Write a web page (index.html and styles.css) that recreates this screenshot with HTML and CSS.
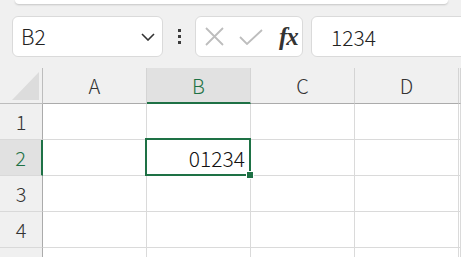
FILE: index.html
```html
<!DOCTYPE html>
<html>
<head>
    <title></title>
    <meta charset="utf-8">
    <link rel="stylesheet" href="styles.css">
</head>
<body>
<div class="ribbon-edge"></div>

<div class="toolbar">
    <div class="namebox">
        <span class="name">B2</span>
        <svg class="chevron" width="14" height="8" viewBox="0 0 14 8">
            <path d="M1 1 L7 7 L13 1" fill="none" stroke="#333" stroke-width="1.6"/>
        </svg>
    </div>
    <div class="dots">
        <span></span><span></span><span></span>
    </div>
    <div class="fxbox">
        <svg class="icon" width="19" height="19" viewBox="0 0 19 19">
            <path d="M1 1 L18 18 M18 1 L1 18" stroke="#bdbdbd" stroke-width="1.8"/>
        </svg>
        <svg class="icon" width="24" height="16" viewBox="0 0 24 16">
            <path d="M1 8 L8 15 L23 1" fill="none" stroke="#bdbdbd" stroke-width="1.8"/>
        </svg>
        <span class="fx">fx</span>
    </div>
    <div class="formula">1234</div>
</div>

<div class="sheet">
    <div class="grid">
        <div class="corner"><span class="corner-tri"></span></div>
        <div class="colhead">A</div>
        <div class="colhead active">B</div>
        <div class="colhead">C</div>
        <div class="colhead">D</div>
        <div class="colhead rest"></div>

        <div class="rowhead">1</div>
        <div class="cell"></div>
        <div class="cell"></div>
        <div class="cell"></div>
        <div class="cell"></div>
        <div class="cell rest"></div>

        <div class="rowhead active">2</div>
        <div class="cell"></div>
        <div class="cell value">01234</div>
        <div class="cell"></div>
        <div class="cell"></div>
        <div class="cell rest"></div>

        <div class="rowhead">3</div>
        <div class="cell"></div>
        <div class="cell"></div>
        <div class="cell"></div>
        <div class="cell"></div>
        <div class="cell rest"></div>

        <div class="rowhead">4</div>
        <div class="cell"></div>
        <div class="cell"></div>
        <div class="cell"></div>
        <div class="cell"></div>
        <div class="cell rest"></div>

        <div class="rowhead"></div>
        <div class="cell"></div>
        <div class="cell"></div>
        <div class="cell"></div>
        <div class="cell"></div>
        <div class="cell rest"></div>
    </div>
    <div class="selection"><span class="handle"></span></div>
</div>
</body>
</html>
```

FILE: styles.css
```css
body {
    margin: 0;
    width: 461px;
    height: 257px;
    overflow: hidden;
    background: #f0f0f0;
    font-family: "Noto Sans CJK JP", "Noto Sans", sans-serif;
    font-weight: 300;
    color: #222;
}

.ribbon-edge {
    height: 4px;
    margin: 0 13px 0 15px;
    background: #fff;
    border-radius: 0 0 8px 8px;
    box-shadow: 0 1px 2px rgba(0, 0, 0, 0.18);
}

.toolbar {
    display: flex;
    align-items: center;
    height: 41px;
    margin-top: 12px;
    padding-left: 12px;
    overflow: hidden;
}

.namebox {
    box-sizing: border-box;
    width: 151px;
    height: 41px;
    display: flex;
    align-items: center;
    justify-content: space-between;
    padding: 0 7px 0 8px;
    background: #fff;
    border: 1px solid #dadada;
    border-radius: 6px;
}

.name {
    font-size: 21px;
    line-height: 1;
}

.dots {
    width: 32px;
    display: flex;
    flex-direction: column;
    align-items: center;
    gap: 3px;
}

.dots span {
    width: 3px;
    height: 3px;
    background: #3c3c3c;
}

.fxbox {
    box-sizing: border-box;
    width: 108px;
    height: 41px;
    display: flex;
    align-items: center;
    padding-left: 9px;
    background: #fff;
    border: 1px solid #dadada;
    border-radius: 6px;
}

.fxbox .icon + .icon {
    margin-left: 15px;
}

.fx {
    margin-left: 16px;
    font-family: "Liberation Serif", serif;
    font-style: italic;
    font-weight: bold;
    font-size: 25px;
    line-height: 1;
    color: #333;
    letter-spacing: -1px;
}

.formula {
    box-sizing: border-box;
    flex: 1;
    height: 41px;
    margin-left: 8px;
    margin-right: -10px;
    padding-left: 19px;
    display: flex;
    align-items: center;
    background: #fff;
    border: 1px solid #dadada;
    border-radius: 6px;
    font-size: 21px;
}

.sheet {
    position: relative;
    margin-top: 11px;
    overflow: hidden;
}

.grid {
    display: grid;
    grid-template-columns: 43px 104px 104px 104px 104px 2px;
    grid-auto-rows: 36px;
    background: #fff;
}

.corner,
.colhead,
.rowhead,
.cell {
    box-sizing: border-box;
}

.corner {
    background: #f0f0f0;
    border-right: 1px solid #bdbdbd;
    border-bottom: 1px solid #bdbdbd;
    padding: 4px 3px 3px 12px;
}

.corner-tri {
    display: block;
    width: 100%;
    height: 100%;
    background: #dcdcdc;
    clip-path: polygon(100% 0, 100% 100%, 0 100%);
}

.colhead {
    background: #f0f0f0;
    border-right: 1px solid #d4d4d4;
    border-bottom: 1px solid #ababab;
    display: flex;
    align-items: center;
    justify-content: center;
    font-size: 20px;
    color: #333;
}

.colhead.active {
    background: #e1e1e1;
    color: #1e7145;
    border-bottom: 2px solid #1e7145;
}

.rowhead {
    background: #f0f0f0;
    border-right: 1px solid #ababab;
    border-bottom: 1px solid #d9d9d9;
    display: flex;
    align-items: center;
    justify-content: center;
    font-size: 20px;
    color: #333;
}

.rowhead.active {
    background: #e1e1e1;
    color: #1e7145;
    border-right: 2px solid #1e7145;
}

.cell {
    border-right: 1px solid #dadada;
    border-bottom: 1px solid #dadada;
}

.cell.value {
    display: flex;
    align-items: center;
    justify-content: flex-end;
    padding-right: 5px;
    font-size: 21px;
    color: #111;
}

.selection {
    position: absolute;
    left: 145px;
    top: 70px;
    width: 106px;
    height: 38px;
    box-sizing: border-box;
    border: 2px solid #1e7145;
    pointer-events: none;
}

.handle {
    position: absolute;
    right: -5px;
    bottom: -5px;
    width: 6px;
    height: 6px;
    background: #1e7145;
    border: 1px solid #fff;
}
```
